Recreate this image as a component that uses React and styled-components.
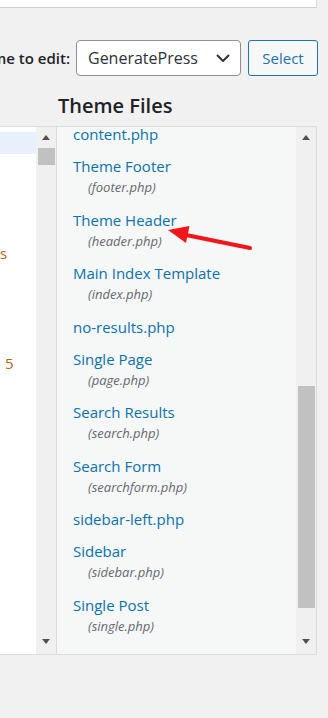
import styled, { createGlobalStyle } from "styled-components";

const GlobalStyle = createGlobalStyle`
  html, body {
    margin: 0;
    padding: 0;
    background: #f1f1f1;
  }
  body {
    font-family: "Open Sans", "Noto Sans", sans-serif;
    color: #1d2327;
  }
`;

const Page = styled.div`
  width: 328px;
  height: 718px;
  overflow: hidden;
  background: #f1f1f1;
`;

const TopBox = styled.div`
  width: 316px;
  height: 7px;
  background: #fff;
  border-bottom: 1px solid #cfcfcf;
  border-right: 1px solid #dcdcde;
`;

const ThemeRow = styled.div`
  width: 318px;
  margin-top: 32px;
  display: flex;
  justify-content: flex-end;
  align-items: center;
  gap: 6px;
`;

const Label = styled.label`
  flex-shrink: 0;
  white-space: nowrap;
  font-size: 15px;
  font-weight: 600;
  color: #1d2327;
`;

const SelectBox = styled.div`
  flex-shrink: 0;
  width: 165px;
  height: 36px;
  box-sizing: border-box;
  border: 1px solid #8c8f94;
  border-radius: 4px;
  background: #fff;
  display: flex;
  align-items: center;
  justify-content: space-between;
  padding: 0 10px 0 11px;
  font-size: 16px;
  color: #2c3338;
`;

const Button = styled.button`
  flex-shrink: 0;
  margin-left: 1px;
  width: 70px;
  height: 36px;
  box-sizing: border-box;
  border: 1px solid #2271b1;
  border-radius: 3px;
  background: #f6f7f7;
  color: #2271b1;
  font-family: inherit;
  font-size: 15px;
  padding: 0;
`;

const Heading = styled.h2`
  margin: 16px 0 6px 58px;
  font-size: 20px;
  line-height: 28px;
  font-weight: 600;
  color: #1d2327;
`;

const Panels = styled.div`
  display: flex;
  height: 529px;
`;

const Editor = styled.div`
  width: 56px;
  display: flex;
  box-sizing: border-box;
  border-top: 1px solid #dcdcde;
  border-bottom: 1px solid #dcdcde;
  background: #fff;
`;

const Code = styled.div`
  width: 36px;
  overflow: hidden;
  padding-top: 5px;
`;

const CodeLine = styled.div`
  height: 22px;
  line-height: 22px;
  font-size: 15px;
  white-space: nowrap;
  color: #b8641c;
  padding-left: ${({ $indent }) => $indent || 0}px;
  background: ${({ $active }) => ($active ? "#e8f1fb" : "transparent")};
`;

const Scrollbar = styled.div`
  width: 20px;
  flex-shrink: 0;
  background: #f0f0f0;
  display: flex;
  flex-direction: column;
  padding-bottom: 3px;
`;

const ArrowButton = styled.div`
  height: 20px;
  display: flex;
  align-items: center;
  justify-content: center;
  &::before {
    content: "";
    width: 0;
    height: 0;
    border-left: 4.5px solid transparent;
    border-right: 4.5px solid transparent;
    ${({ $down }) =>
      $down ? "border-top: 5px solid #505050;" : "border-bottom: 5px solid #505050;"}
  }
`;

const Track = styled.div`
  flex: 1;
`;

const Thumb = styled.div`
  margin: ${({ $top }) => $top}px 1px 0 2px;
  height: ${({ $height }) => $height}px;
  background: #c1c1c1;
`;

const FilePanel = styled.div`
  position: relative;
  flex: 0 0 261px;
  box-sizing: border-box;
  display: flex;
  border: 1px solid #dcdcde;
  background: #f6f7f7;
`;

const FileScroll = styled.div`
  flex: 1;
  overflow: hidden;
`;

const FileList = styled.ul`
  list-style: none;
  margin: -9px 0 0;
  padding: 0 0 0 16px;
`;

const FileItem = styled.li`
  padding: 5px 0;
`;

const FileName = styled.a`
  display: block;
  font-size: 15px;
  line-height: 22px;
  color: #0a72ad;
  text-decoration: none;
  white-space: nowrap;
`;

const FileDesc = styled.span`
  display: block;
  padding-left: 15px;
  font-size: 13px;
  line-height: 21.5px;
  font-style: italic;
  color: #646970;
`;

const Pointer = styled.svg`
  position: absolute;
  left: 103px;
  top: 95px;
  width: 96px;
  height: 30px;
  overflow: visible;
`;

const files = [
  { name: "content.php" },
  { name: "Theme Footer", file: "footer.php" },
  { name: "Theme Header", file: "header.php" },
  { name: "Main Index Template", file: "index.php" },
  { name: "no-results.php" },
  { name: "Single Page", file: "page.php" },
  { name: "Search Results", file: "search.php" },
  { name: "Search Form", file: "searchform.php" },
  { name: "sidebar-left.php" },
  { name: "Sidebar", file: "sidebar.php" },
  { name: "Single Post", file: "single.php" },
];

const codeLines = [
  { text: "", active: true },
  { text: "" },
  { text: "" },
  { text: "" },
  { text: "" },
  { text: "s", indent: -5 },
  { text: "" },
  { text: "" },
  { text: "" },
  { text: "" },
  { text: "5", indent: 5 },
];

function App() {
  return (
    <Page>
      <GlobalStyle />
      <TopBox />

      <ThemeRow>
        <Label>Select theme to edit:</Label>
        <SelectBox>
          <span>GeneratePress</span>
          <svg width="14" height="8" viewBox="0 0 14 8">
            <path d="M1 1l6 6 6-6" fill="none" stroke="#2c3338" strokeWidth="2" />
          </svg>
        </SelectBox>
        <Button>Select</Button>
      </ThemeRow>

      <Heading>Theme Files</Heading>

      <Panels>
        <Editor>
          <Code>
            {codeLines.map((line, i) => (
              <CodeLine key={i} $active={line.active} $indent={line.indent}>
                {line.text}
              </CodeLine>
            ))}
          </Code>
          <Scrollbar>
            <ArrowButton />
            <Track>
              <Thumb $top={1} $height={17} />
            </Track>
            <ArrowButton $down />
          </Scrollbar>
        </Editor>

        <FilePanel>
          <FileScroll>
            <FileList>
              {files.map((f) => (
                <FileItem key={f.name}>
                  <FileName href="#">{f.name}</FileName>
                  {f.file && <FileDesc>({f.file})</FileDesc>}
                </FileItem>
              ))}
            </FileList>
          </FileScroll>
          <Scrollbar>
            <ArrowButton />
            <Track>
              <Thumb $top={239} $height={222} />
            </Track>
            <ArrowButton $down />
          </Scrollbar>
          <Pointer viewBox="160 222 96 30">
            <line x1="186" y1="235" x2="250" y2="248" stroke="#f2161b" strokeWidth="4" strokeLinecap="round" />
            <polygon points="168,230 189.5,226 186,243" fill="#f2161b" />
          </Pointer>
        </FilePanel>
      </Panels>
    </Page>
  );
}

export default App;
